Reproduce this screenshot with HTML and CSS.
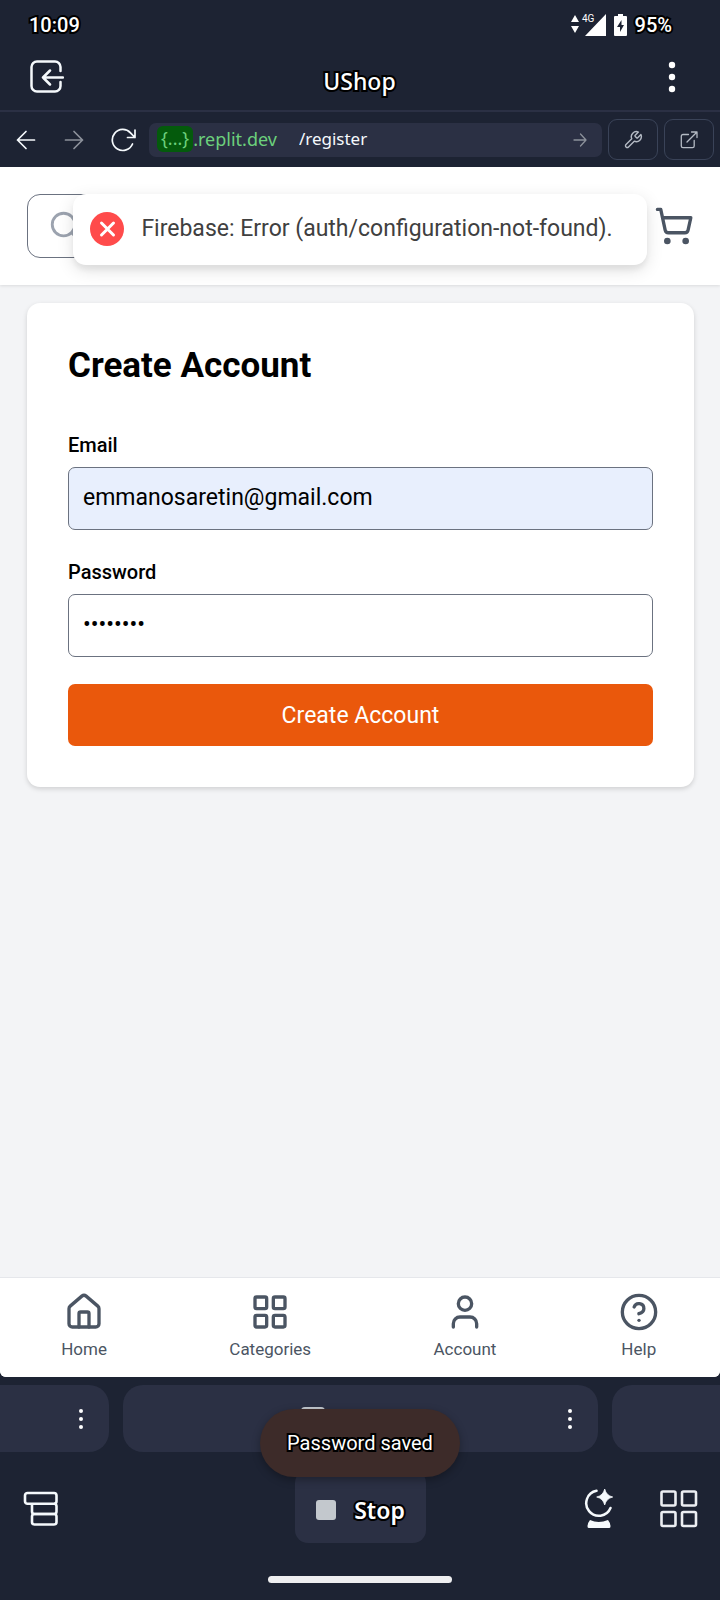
FILE: index.html
```html
<!DOCTYPE html>
<html lang="en">
<head>
<meta charset="utf-8">
<meta name="viewport" content="width=device-width, initial-scale=1">
<title>UShop</title>
<link rel="stylesheet" href="styles.css">
</head>
<body>
<div class="status">
  <span class="status-text outlined">10:09</span>
  <div class="status-right">
    <svg class="signal" viewBox="0 0 36 24" width="36" height="24"><path d="M5 2l4 7H1zM5 20l4-7H1zM36 1v22H15z" fill="#fff"/><text x="12" y="9" font-size="10" fill="#fff">4G</text></svg>
    <svg viewBox="0 0 13 22" width="13" height="22"><path d="M4 0h5v2h3a1 1 0 0 1 1 1v18a1 1 0 0 1-1 1H1a1 1 0 0 1-1-1V3a1 1 0 0 1 1-1h3z" fill="#fff"/><path d="M7.500 6L3 13h3v5l4-7H7.500z" fill="#1d2333"/></svg>
    <span class="status-text outlined">95%</span>
  </div>
</div>
<header class="app-bar">
  <button class="plain" aria-label="Exit"><svg viewBox="0 0 34 34" width="34" height="34" fill="none" stroke="#f5f9fc" stroke-width="2.500" stroke-linecap="round" stroke-linejoin="round"><path d="M30.500 11V7a5.500 5.500 0 0 0-5.500-5.500H7A5.500 5.500 0 0 0 1.500 7v19A5.500 5.500 0 0 0 7 31.500h18a5.500 5.500 0 0 0 5.500-5.500v-4"/><path d="M33 17.500H13M20 10.500l-7 7 7 7"/></svg></button>
  <h1 class="app-title outlined">UShop</h1>
  <button class="plain" aria-label="More"><svg viewBox="0 0 34 34" width="34" height="34" fill="#fff"><circle cx="17" cy="5" r="3.200"/><circle cx="17" cy="17" r="3.200"/><circle cx="17" cy="29" r="3.200"/></svg></button>
</header>
<div class="browser-bar">
  <div class="browser-nav">
    <button class="plain" aria-label="Back"><svg viewBox="0 0 24 24" width="24" height="24" fill="none" stroke="#f5f9fc" stroke-width="1.700" stroke-linecap="round" stroke-linejoin="round"><path d="M20.500 12h-17M12 3.500L3.500 12l8.500 8.500"/></svg></button>
    <button class="plain" aria-label="Forward"><svg viewBox="0 0 24 24" width="24" height="24" fill="none" stroke="#8c919b" stroke-width="1.700" stroke-linecap="round" stroke-linejoin="round"><path d="M3.500 12h17M12 3.500l8.500 8.500-8.500 8.500"/></svg></button>
    <button class="plain" aria-label="Reload"><svg viewBox="0 0 26 24" width="26" height="24" fill="none" stroke="#f5f9fc" stroke-width="1.700" stroke-linecap="round" stroke-linejoin="round"><path d="M22.500 16A10.500 10.500 0 1 1 20.500 4.800L25 9.500M25 2v7.500h-7.500"/></svg></button>
  </div>
  <div class="url">
    <span class="host"><span class="chip">{...}</span>.replit.dev</span>
    <input class="path" type="text" value="/register" aria-label="Path">
    <svg viewBox="0 0 14 14" width="14" height="14" fill="none" stroke="#8c919b" stroke-width="1.300" stroke-linecap="round" stroke-linejoin="round"><path d="M1 7h12M7.500 1L13 7l-5.500 6"/></svg>
  </div>
  <button class="tool" aria-label="Developer tools"><svg viewBox="0 0 24 24" width="20" height="20" fill="none" stroke="#b4bac4" stroke-width="1.700" stroke-linecap="round" stroke-linejoin="round"><path d="M14.700 6.300a1 1 0 0 0 0 1.400l1.600 1.600a1 1 0 0 0 1.400 0l3.770-3.770a6 6 0 0 1-7.940 7.940l-6.910 6.910a2.120 2.120 0 0 1-3-3l6.910-6.910a6 6 0 0 1 7.940-7.940l-3.760 3.760z"/></svg></button>
  <button class="tool" aria-label="Open in new tab"><svg viewBox="0 0 18 18" width="18" height="18" fill="none" stroke="#b4bac4" stroke-width="1.300" stroke-linecap="round" stroke-linejoin="round"><path d="M8.500 3.500H3A1.700 1.700 0 0 0 1.300 5.200V15A1.700 1.700 0 0 0 3 16.700h9.500a1.700 1.700 0 0 0 1.700-1.700V9.500M11.500 1H17v5.500M17 1L7 11"/></svg></button>
</div>

<div class="page">
  <div class="shop-header">
    <div class="search">
      <svg viewBox="0 0 24 24" width="34" height="34" fill="none" stroke="#9ca3af" stroke-width="2" stroke-linecap="round"><circle cx="11" cy="11" r="8"/><path d="m21 21-4.300-4.300"/></svg>
      <input type="search" aria-label="Search">
    </div>
    <a class="cart" href="#cart" aria-label="Cart"><svg viewBox="0 0 24 24" width="40" height="40" fill="none" stroke="#4b5563" stroke-width="2" stroke-linecap="round" stroke-linejoin="round"><circle cx="8" cy="21" r="1"/><circle cx="19" cy="21" r="1"/><path d="M2.050 2.050h2l2.660 12.420a2 2 0 0 0 2 1.580h9.780a2 2 0 0 0 1.950-1.570l1.650-7.430H5.120"/></svg></a>
    <div class="toast-layer">
      <div class="error-toast" role="alert">
        <svg viewBox="0 0 34 34" width="34" height="34"><circle cx="17" cy="17" r="17" fill="#ff4b4b"/><path d="M11.500 11l12 12M23.500 11l-12 12" stroke="#fff" stroke-width="3" stroke-linecap="round"/></svg>
        <span>Firebase: Error (auth/configuration-not-found).</span>
      </div>
    </div>
  </div>
  <main class="content">
    <form class="card">
      <h2>Create Account</h2>
      <label for="email">Email</label>
      <input class="field filled" id="email" type="email" value="emmanosaretin@gmail.com">
      <label for="password">Password</label>
      <input class="field" id="password" type="password" value="password">
      <button class="submit" type="button">Create Account</button>
    </form>
  </main>
  <nav class="shop-nav">
    <a href="#home"><svg viewBox="0 0 24 24"><path d="M15 21v-8a1 1 0 0 0-1-1h-4a1 1 0 0 0-1 1v8"/><path d="M3 10a2 2 0 0 1 .709-1.528l7-5.999a2 2 0 0 1 2.582 0l7 5.999A2 2 0 0 1 21 10v9a2 2 0 0 1-2 2H5a2 2 0 0 1-2-2z"/></svg>Home</a>
    <a href="#categories"><svg viewBox="0 0 24 24"><rect x="3" y="3" width="7" height="7" rx="1"/><rect x="14" y="3" width="7" height="7" rx="1"/><rect x="14" y="14" width="7" height="7" rx="1"/><rect x="3" y="14" width="7" height="7" rx="1"/></svg>Categories</a>
    <a href="#account"><svg viewBox="0 0 24 24"><path d="M19 21v-2a4 4 0 0 0-4-4H9a4 4 0 0 0-4 4v2"/><circle cx="12" cy="7" r="4"/></svg>Account</a>
    <a href="#help"><svg viewBox="0 0 24 24"><circle cx="12" cy="12" r="10"/><path d="M9.090 9a3 3 0 0 1 5.830 1c0 2-3 3-3 3"/><path d="M12 17h.010"/></svg>Help</a>
  </nav>
</div>

<footer class="dock">
  <div class="tabs">
    <div class="tab first"><button class="plain" aria-label="Tab menu"><svg viewBox="0 0 6 22" width="6" height="22" fill="#fff"><circle cx="3" cy="3" r="2"/><circle cx="3" cy="11" r="2"/><circle cx="3" cy="19" r="2"/></svg></button></div>
    <div class="tab current"><svg class="tab-icon" viewBox="0 0 24 22" width="24" height="22" fill="none" stroke="#c3c8ce" stroke-width="2"><rect x="1" y="1" width="22" height="20" rx="3"/></svg><button class="plain" aria-label="Tab menu"><svg viewBox="0 0 6 22" width="6" height="22" fill="#fff"><circle cx="3" cy="3" r="2"/><circle cx="3" cy="11" r="2"/><circle cx="3" cy="19" r="2"/></svg></button></div>
    <div class="tab last"></div>
  </div>
  <div class="actions">
    <button class="plain" aria-label="Files"><svg viewBox="0 0 36 36" width="36" height="36" fill="none" stroke="#f5f9fc" stroke-width="2.600" stroke-linejoin="round"><rect x="2" y="2" width="31.500" height="10.700" rx="2.500"/><path d="M9 12.700v7.800a2.500 2.500 0 0 0 2.500 2.500h19.500a2.500 2.500 0 0 0 2.500-2.500v-5.300a2.500 2.500 0 0 0-2.500-2.500"/><rect x="9" y="23" width="24.500" height="10.500" rx="2.500"/></svg></button>
    <button class="stop"><svg viewBox="0 0 20 20" width="20" height="20"><rect width="20" height="20" rx="3" fill="#c3c8cd"/></svg><span class="outlined">Stop</span></button>
    <div class="action-group">
      <button class="plain" aria-label="Assistant"><svg viewBox="0 0 30 40" width="30" height="40"><path d="M12.500 1.800A12.600 12.600 0 1 0 26.500 19" fill="none" stroke="#f5f9fc" stroke-width="2.500" stroke-linecap="round"/><path d="M20.700 0q1.500 6.500 8 8-6.500 1.500-8 8-1.500-6.500-8-8 6.500-1.500 8-8z" fill="#f5f9fc" stroke="#f5f9fc" stroke-width=".8"/><path d="M6 31q8.500 4 18 0 2.500 3 2.500 6.500 0 1.500-1.500 1.500H5q-1.500 0-1.500-1.500Q3.500 34 6 31z" fill="#f5f9fc"/></svg></button>
      <button class="plain" aria-label="All tabs"><svg viewBox="0 0 38 38" width="38" height="38" fill="none" stroke="#eceef2" stroke-width="2.600"><rect x="1.500" y="1.500" width="14" height="14" rx="1.500"/><rect x="22" y="1.500" width="14" height="14" rx="1.500"/><rect x="1.500" y="22" width="14" height="14" rx="1.500"/><rect x="22" y="22" width="14" height="14" rx="1.500"/></svg></button>
    </div>
  </div>
  <div class="gesture"></div>
  <div class="snackbar-layer"><div class="snackbar outlined" role="status">Password saved</div></div>
</footer>
</body>
</html>
```

FILE: styles.css
```css
* { box-sizing: border-box; }
body {
  margin: 0;
  min-height: 100vh;
  display: flex;
  flex-direction: column;
  background: #1d2333;
  font-family: Roboto, sans-serif;
  color: #000;
}
svg { display: block; flex: none; }
button, input { font: inherit; }
.plain { padding: 0; border: 0; background: none; display: flex; align-items: center; justify-content: center; }
.outlined { color: #fff; -webkit-text-stroke: 4px #000; paint-order: stroke fill; stroke-linejoin: round; }

.status { height: 50px; padding: 0 48px 0 29px; display: flex; align-items: center; justify-content: space-between; }
.status-right { display: flex; align-items: center; gap: 8px; }
.status-text { font-size: 20px; font-weight: 500; line-height: 24px; }

.app-bar { height: 62px; padding: 0 31px 0 30px; display: flex; align-items: flex-start; justify-content: space-between; border-bottom: 2px solid #2b3044; }
.app-bar .plain { margin-top: 10px; }
.app-title { margin: 17px 0 0; font: 500 23px/28px "Noto Sans", sans-serif; }

.browser-bar { height: 55px; padding: 0 6px 0 2px; display: flex; align-items: center; gap: 6px; }
.browser-nav { display: flex; width: 141px; gap: 24px; padding-left: 12px; }
.url { flex: 1; min-width: 0; height: 34px; padding: 0 15px 0 8px; display: flex; align-items: center; gap: 22px; border-radius: 7px; background: #2b3044; }
.host { display: flex; align-items: center; color: #6cd07c; font: 18px/24px "Noto Sans", sans-serif; }
.chip { height: 26px; padding: 0 4px; border-radius: 6px; background: #045a0c; }
.host, .path { padding-bottom: 2px; }
.path { flex: 1; min-width: 0; padding: 0 0 2px; border: 0; background: none; color: #f5f9fc; font: 17px/24px "Noto Sans", sans-serif; }
.tool { width: 50px; height: 41px; padding: 0; display: flex; align-items: center; justify-content: center; border: 1px solid #3a4358; border-radius: 9px; background: none; }

.page { flex: 1; display: flex; flex-direction: column; overflow: hidden; border-radius: 0 0 6px 6px; background: #f3f4f6; }
.shop-header { position: relative; height: 118px; padding: 0 26px 0 27px; display: flex; align-items: center; gap: 24px; background: #fff; box-shadow: 0 1px 3px rgba(0,0,0,.1); }
.search { flex: 1; height: 64px; padding: 0 20px; display: flex; align-items: center; border: 1px solid #6b7280; border-radius: 13px; }
.search input { flex: 1; min-width: 0; border: 0; background: none; }
.toast-layer { position: absolute; inset: 27px 0 auto; display: flex; justify-content: center; }
.error-toast { height: 71px; padding: 0 34px 2px 17px; display: flex; align-items: center; gap: 17px; border-radius: 13px; background: #fff; color: #404040; font-size: 23px; box-shadow: 0 5px 17px rgba(0,0,0,.12), 0 5px 5px rgba(0,0,0,.05); }

.content { flex: 1; padding: 18px 26px 18px 27px; }
.card { padding: 41px; display: flex; flex-direction: column; border-radius: 13px; background: #fff; box-shadow: 0 2px 5px rgba(0,0,0,.15); }
.card h2 { margin: 0 0 42px; font-size: 35px; line-height: 44px; font-weight: 700; }
.card label { margin-bottom: 7px; font-size: 20px; line-height: 30px; font-weight: 500; }
.field { width: 100%; height: 63px; margin-bottom: 27px; padding: 0 14px 2px; border: 1px solid #6b7280; border-radius: 7px; background: #fff; color: #000; font-size: 23px; }
.filled { background: #e8effd; }
.submit { height: 62px; border: 0; border-radius: 7px; background: #ea580c; color: #fff; font-size: 23px; }

.shop-nav { height: 100px; padding-top: 14px; display: flex; justify-content: space-around; border-top: 1px solid #e5e7eb; background: #fff; }
.shop-nav a { display: flex; flex-direction: column; align-items: center; gap: 4px; color: #4b5563; font-size: 17px; line-height: 26px; text-decoration: none; }
.shop-nav svg { width: 40px; height: 40px; fill: none; stroke: #4b5563; stroke-width: 2; stroke-linecap: round; stroke-linejoin: round; }

.dock { position: relative; height: 223px; padding-top: 8px; display: flex; flex-direction: column; }
.tabs { height: 67px; display: flex; gap: 14px; }
.tab { position: relative; display: flex; align-items: center; justify-content: flex-end; padding-right: 25px; border-radius: 20px; background: #2b3044; }
.first { width: 109px; border-radius: 0 20px 20px 0; }
.current { flex: 1; }
.last { width: 108px; border-radius: 20px 0 0 20px; }
.tab-icon { position: absolute; left: 178px; top: 22px; }
.actions { margin-top: 18px; height: 73px; padding: 0 22px 0 23px; display: grid; grid-template-columns: 1fr auto 1fr; align-items: center; }
.actions > .plain { justify-self: start; padding-top: 5px; }
.action-group { justify-self: end; display: flex; align-items: center; gap: 46px; padding-top: 5px; }
.stop { height: 73px; padding: 6px 21px 0; display: flex; align-items: center; gap: 18px; border: 0; border-radius: 13px; background: #2b3044; font: 600 23px/28px "Noto Sans", sans-serif; }
.gesture { width: 184px; height: 7px; margin: 33px auto 0; border-radius: 4px; background: #eeeef0; }
.snackbar-layer { position: absolute; inset: 32px 0 auto; display: flex; justify-content: center; }
.snackbar { padding: 1px 27px 0; border-radius: 34px; background: #3d2b29; font-size: 20px; line-height: 67px; box-shadow: 0 3px 8px rgba(0,0,0,.3); }
```
